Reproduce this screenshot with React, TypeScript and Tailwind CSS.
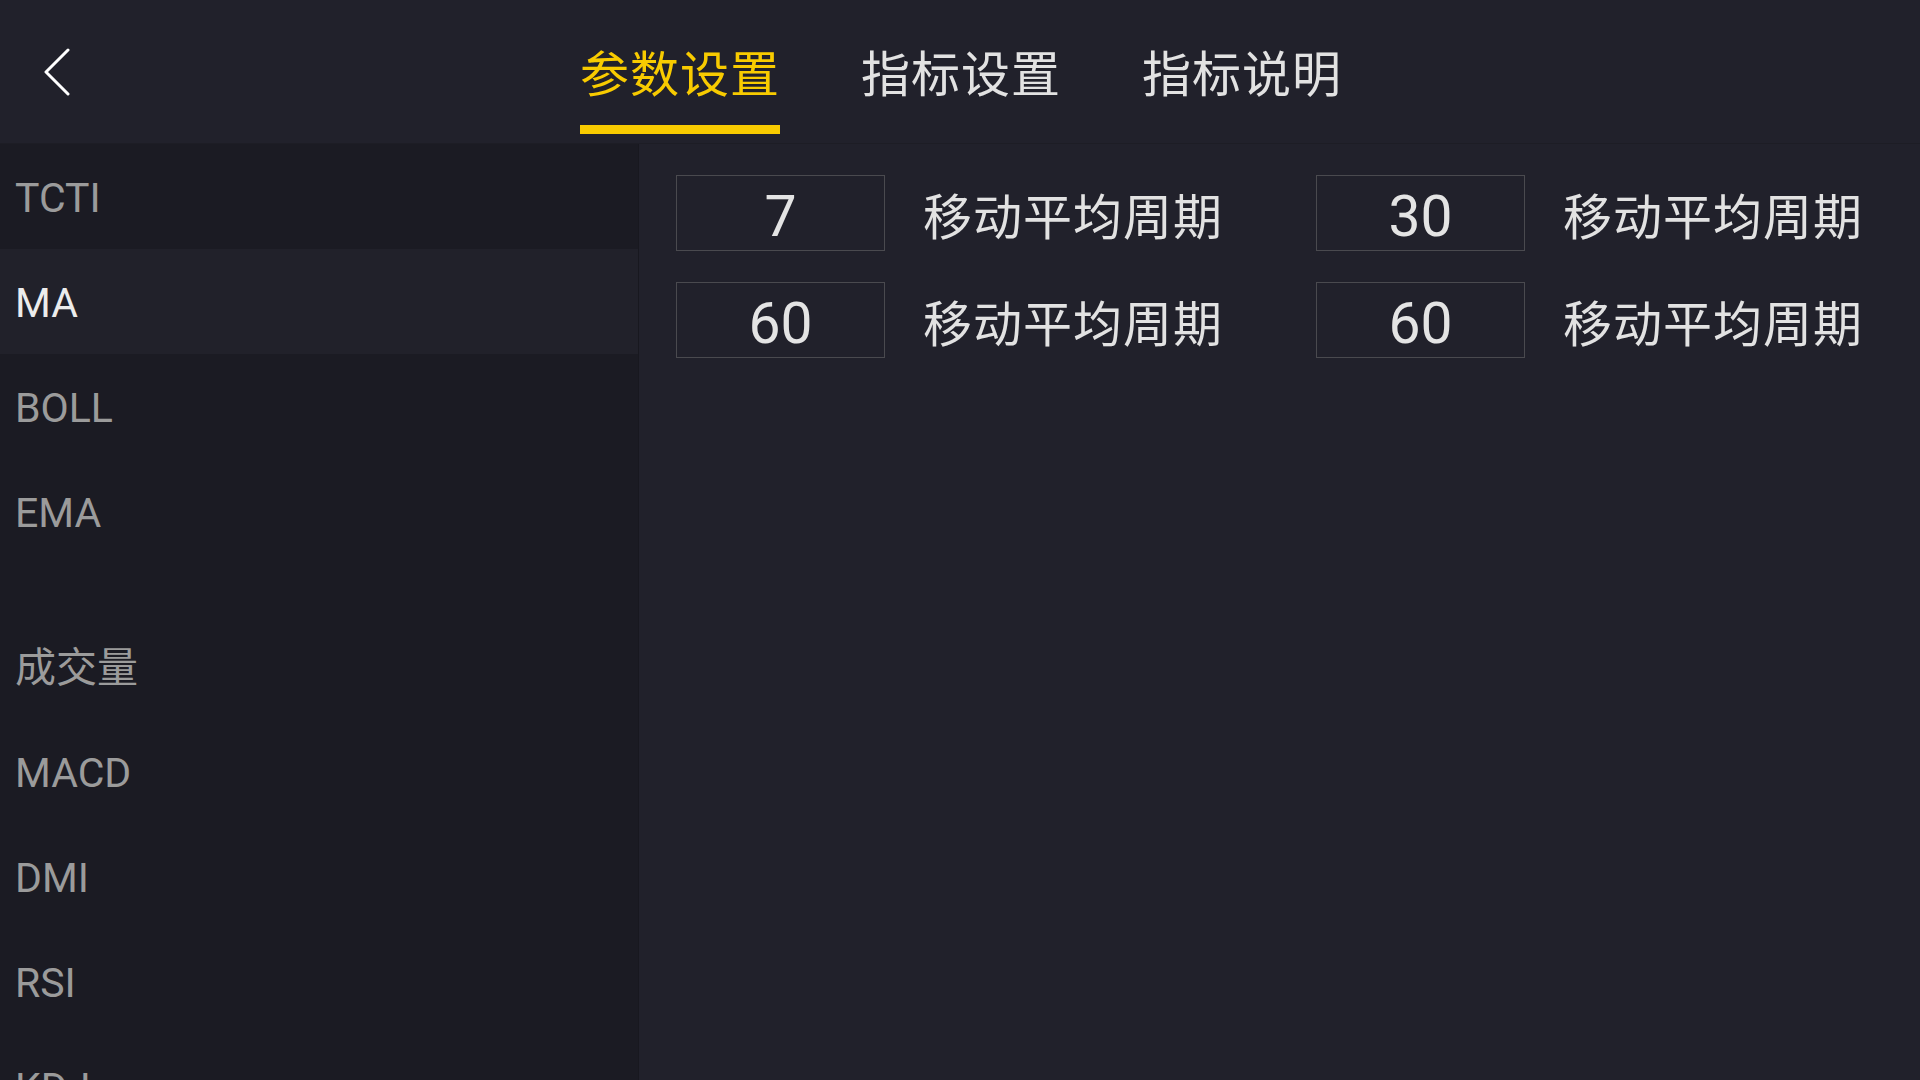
import React, { useState } from 'react';

const tabs = ['参数设置', '指标设置', '指标说明'];

// null marks the spacer between the main-chart and sub-chart indicators
const indicators: (string | null)[] = ['TCTI', 'MA', 'BOLL', 'EMA', null, '成交量', 'MACD', 'DMI', 'RSI', 'KDJ'];

const params = [
  { value: '7', label: '移动平均周期' },
  { value: '30', label: '移动平均周期' },
  { value: '60', label: '移动平均周期' },
  { value: '60', label: '移动平均周期' },
];

const font = { fontFamily: 'Roboto, "Noto Sans CJK SC", sans-serif' };

const BackIcon: React.FC = () => (
  <svg width="30" height="48" viewBox="0 0 30 48" fill="none">
    <path d="M26 2 L4 24 L26 46" stroke="#ffffff" strokeWidth="3" strokeLinecap="round" strokeLinejoin="round" />
  </svg>
);

const App: React.FC = () => {
  const [activeTab, setActiveTab] = useState(0);
  const [selected, setSelected] = useState('MA');

  return (
    <div className="w-[1920px] h-[1080px] overflow-hidden bg-[#21212b] flex flex-col" style={font}>
      <header className="h-[144px] shrink-0 flex items-start bg-[#21212b] border-b border-[#1d1d25]">
        <button className="ml-[41px] mt-[48px] w-[32px] h-[48px] flex items-center justify-center">
          <BackIcon />
        </button>
        <nav className="ml-[507px] flex gap-[81px]">
          {tabs.map((t, i) => (
            <button key={t} onClick={() => setActiveTab(i)} className="flex flex-col items-center pt-[46px]">
              <span
                className={`text-[49px] leading-[60px] tracking-[1px] ${i === activeTab ? 'text-[#f8cb00]' : 'text-[#e2e2e2]'}`}
              >
                {t}
              </span>
              <span className={`mt-[19px] h-[9px] w-[200px] ${i === activeTab ? 'bg-[#f8cb00]' : 'bg-transparent'}`} />
            </button>
          ))}
        </nav>
      </header>

      <div className="flex flex-1 min-h-0">
        <aside className="w-[639px] shrink-0 bg-[#1b1b23] border-r border-[#18181f] overflow-hidden">
          {indicators.map((name, i) =>
            name === null ? (
              <div key={`gap-${i}`} className="h-[50px]" />
            ) : (
              <div
                key={name}
                onClick={() => setSelected(name)}
                className={`h-[105px] flex items-center pl-[15px] pt-[5px] text-[41px] ${
                  name === selected ? 'bg-[#21212a] text-[#ececec]' : 'text-[#9b9b9b]'
                }`}
              >
                {name}
              </div>
            )
          )}
        </aside>

        <main className="flex-1 pl-[37px] pt-[31px]">
          <div className="grid grid-cols-[640px_640px] gap-y-[31px]">
            {params.map((p, i) => (
              <div key={i} className="flex items-start h-[76px]">
                <div className="w-[209px] h-[76px] border border-[#4a4a4f] flex items-center justify-center pt-[8px] text-[57px] text-[#e4e4e4]">
                  {p.value}
                </div>
                <span className="ml-[38px] pt-[12px] leading-[64px] text-[49px] text-[#e2e2e2] tracking-[1px]">
                  {p.label}
                </span>
              </div>
            ))}
          </div>
        </main>
      </div>
    </div>
  );
};

export default App;
